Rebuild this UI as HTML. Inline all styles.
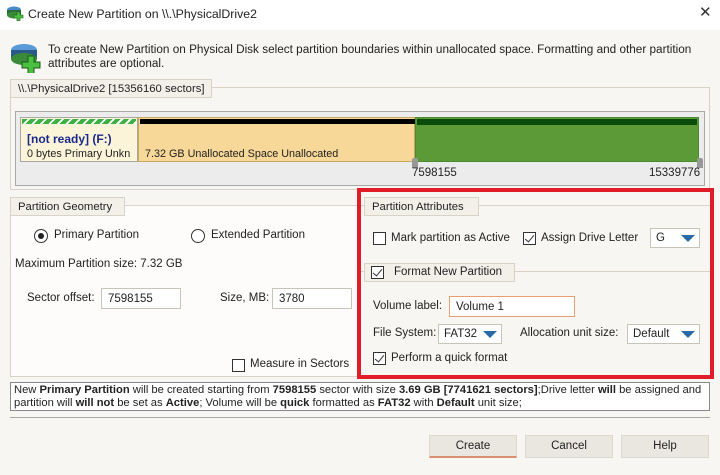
<!DOCTYPE html>
<html><head><style>
*{margin:0;padding:0;box-sizing:border-box}
body{width:720px;height:475px;background:#f8f6f2;font-family:"Liberation Sans",Tahoma,sans-serif;font-size:11.5px;color:#222;position:relative;overflow:hidden}
.a{position:absolute;white-space:nowrap}
.tab{position:absolute;border:1px solid #d8d3c6;background:#f3f0ea;padding:2px 7px;height:19px;line-height:14px;white-space:nowrap;font-size:11.3px}
.line{position:absolute;border:1px solid #d8d3c6}
.cb{position:absolute;width:13px;height:13px;border:1px solid #333;background:#fff}
.cb.c::after{content:"";position:absolute;left:3px;top:0px;width:4px;height:8px;border:solid #333;border-width:0 1.3px 1.3px 0;transform:rotate(40deg)}
.inp{position:absolute;border:1px solid #c8c4b8;background:#fff;padding:4px 6px;height:21px;line-height:13px}
.combo{position:absolute;border:1px solid #c8c4b8;background:#fff;height:20px;line-height:18px;padding-left:5px}
.combo i{position:absolute;right:4px;top:6px;width:0;height:0;border-left:7px solid transparent;border-right:7px solid transparent;border-top:7px solid #2a6aa8}
.btn{position:absolute;width:88px;height:23px;background:#e9e7df;border:1px solid #dcd9cf;text-align:center;line-height:21px}
b{font-weight:bold}
</style></head><body>
<div class="a" style="left:0;top:0;width:720px;height:30px;background:#fff"></div>
<svg class="a" style="left:6px;top:5px" width="18" height="16"><ellipse cx="8" cy="5" rx="7" ry="3.5" fill="#4a8ac8"/><rect x="1" y="5" width="14" height="5" fill="#2a6a38"/><ellipse cx="8" cy="10" rx="7" ry="3.5" fill="#3a8a3a"/><path d="M11 7h3v3h3v3h-3v3h-3v-3h-3v-3h3z" fill="#4ac040" stroke="#1a5a1a" stroke-width=".6"/></svg>
<div class="a" style="left:28px;top:7px;font-size:12.3px">Create New Partition on \\.\PhysicalDrive2</div>
<div class="a" style="left:699px;top:3px;font-size:15px;color:#333">✕</div>
<svg class="a" style="left:9px;top:41px" width="34" height="32"><ellipse cx="15" cy="9" rx="13" ry="6" fill="#5a9ad8"/><path d="M15 9 L28 9 A13 6 0 0 1 20 14.5z" fill="#e8d040"/><rect x="2" y="9" width="26" height="9" fill="#2a5a8a"/><ellipse cx="15" cy="18" rx="13" ry="6" fill="#3a8a3a"/><path d="M19 15h6v6h6v6h-6v6h-6v-6h-6v-6h6z" fill="#4ac040" stroke="#1a5a1a"/></svg>
<div class="a" style="left:48px;top:43px;font-size:11.75px">To create New Partition on Physical Disk select partition boundaries within unallocated space. Formatting and other partition</div>
<div class="a" style="left:48px;top:57px;font-size:11.75px">attributes are optional.</div>

<div class="line" style="left:10px;top:87px;width:700px;height:103px"></div>
<div class="tab" style="left:10px;top:79px;width:202px">\\.\PhysicalDrive2 [15356160 sectors]</div>
<div class="a" style="left:15px;top:111px;width:690px;height:75px;background:#ececec;border:1px solid #a8a8a8"></div>
<div class="a" style="left:20px;top:117px;width:118px;height:45px;background:#fcf4d8;border:1px solid #a8a8a0"></div>
<div class="a" style="left:22px;top:119px;width:114px;height:5px;background:repeating-linear-gradient(135deg,#3cb040 0 4px,#fff 4px 6px)"></div>
<div class="a" style="left:27px;top:132px;color:#1a2a8a;font-weight:bold;font-size:12px">[not ready] (F:)</div>
<div class="a" style="left:27px;top:148px;font-size:10.8px">0 bytes Primary Unkn</div>
<div class="a" style="left:138px;top:117px;width:277px;height:45px;background:#f8d898;border:1px solid #c8a860"></div>
<div class="a" style="left:140px;top:119px;width:275px;height:5px;background:#000"></div>
<div class="a" style="left:145px;top:148px;font-size:10.8px">7.32 GB Unallocated Space Unallocated</div>
<div class="a" style="left:415px;top:117px;width:284px;height:45px;background:#5c9a38;border:1px solid #4a8a30"></div>
<div class="a" style="left:417px;top:119px;width:280px;height:6px;background:#0a4a0a"></div>
<div class="a" style="left:412px;top:158px;width:6px;height:10px;background:#999;border-radius:2px 2px 0 0"></div>
<div class="a" style="left:697px;top:158px;width:6px;height:10px;background:#999;border-radius:2px 2px 0 0"></div>
<div class="a" style="left:412px;top:167px">7598155</div>
<div class="a" style="left:649px;top:167px">15339776</div>

<div class="line" style="left:10px;top:205px;width:348px;height:172px;background:#fdfcfa"></div>
<div class="tab" style="left:10px;top:197px;width:115px">Partition Geometry</div>
<div class="a" style="left:34px;top:229px;width:14px;height:14px;border:1px solid #333;border-radius:50%;background:#fff"></div>
<div class="a" style="left:38px;top:233px;width:6px;height:6px;border-radius:50%;background:#222"></div>
<div class="a" style="left:54px;top:229px">Primary Partition</div>
<div class="a" style="left:191px;top:229px;width:14px;height:14px;border:1px solid #333;border-radius:50%;background:#fff"></div>
<div class="a" style="left:211px;top:229px">Extended Partition</div>
<div class="a" style="left:15px;top:258px">Maximum Partition size: 7.32 GB</div>
<div class="a" style="left:27px;top:292px">Sector offset:</div>
<div class="inp" style="left:101px;top:288px;width:80px">7598155</div>
<div class="a" style="left:220px;top:292px">Size, MB:</div>
<div class="inp" style="left:272px;top:288px;width:80px">3780</div>
<div class="cb" style="left:232px;top:359px"></div>
<div class="a" style="left:250px;top:358px">Measure in Sectors</div>

<div class="a" style="left:357px;top:188px;width:357px;height:191px;border:4px solid #e01c28;background:#f8f6f2"></div>
<div class="a" style="left:361px;top:205px;width:349px;border-top:1px solid #d8d3c6"></div>
<div class="tab" style="left:364px;top:197px;width:115px">Partition Attributes</div>
<div class="cb" style="left:373px;top:232px"></div>
<div class="a" style="left:391px;top:232px">Mark partition as Active</div>
<div class="cb c" style="left:523px;top:232px"></div>
<div class="a" style="left:541px;top:232px">Assign Drive Letter</div>
<div class="combo" style="left:650px;top:228px;width:50px">G<i></i></div>
<div class="a" style="left:361px;top:271px;width:349px;border-top:1px solid #d8d3c6"></div>
<div class="tab" style="left:364px;top:263px;width:151px"></div>
<div class="cb c" style="left:371px;top:266px"></div>
<div class="a" style="left:394px;top:266px">Format New Partition</div>
<div class="a" style="left:373px;top:300px">Volume label:</div>
<div class="inp" style="left:449px;top:296px;width:126px;border-color:#e8a070">Volume 1</div>
<div class="a" style="left:373px;top:327px">File System:</div>
<div class="combo" style="left:438px;top:324px;width:64px">FAT32<i></i></div>
<div class="a" style="left:520px;top:327px">Allocation unit size:</div>
<div class="combo" style="left:627px;top:324px;width:73px">Default<i></i></div>
<div class="cb c" style="left:373px;top:352px"></div>
<div class="a" style="left:391px;top:352px">Perform a quick format</div>

<div class="a" style="left:10px;top:382px;width:700px;height:29px;border:1px solid #888;background:#fff"></div>
<div class="a" style="left:14px;top:384px;font-size:11.2px">New <b>Primary Partition</b> will be created starting from <b>7598155</b> sector with size <b>3.69 GB [7741621 sectors]</b>;Drive letter <b>will</b> be assigned and</div>
<div class="a" style="left:14px;top:397px;font-size:11.2px">partition will <b>will not</b> be set as <b>Active</b>; Volume will be <b>quick</b> formatted as <b>FAT32</b> with <b>Default</b> unit size;</div>
<div class="a" style="left:10px;top:417px;width:700px;border-top:1px solid #a8a8a8"></div>
<div class="btn" style="left:429px;top:435px;border-bottom:2px solid #d89070">Create</div>
<div class="btn" style="left:525px;top:435px">Cancel</div>
<div class="btn" style="left:621px;top:435px">Help</div>
</body></html>
